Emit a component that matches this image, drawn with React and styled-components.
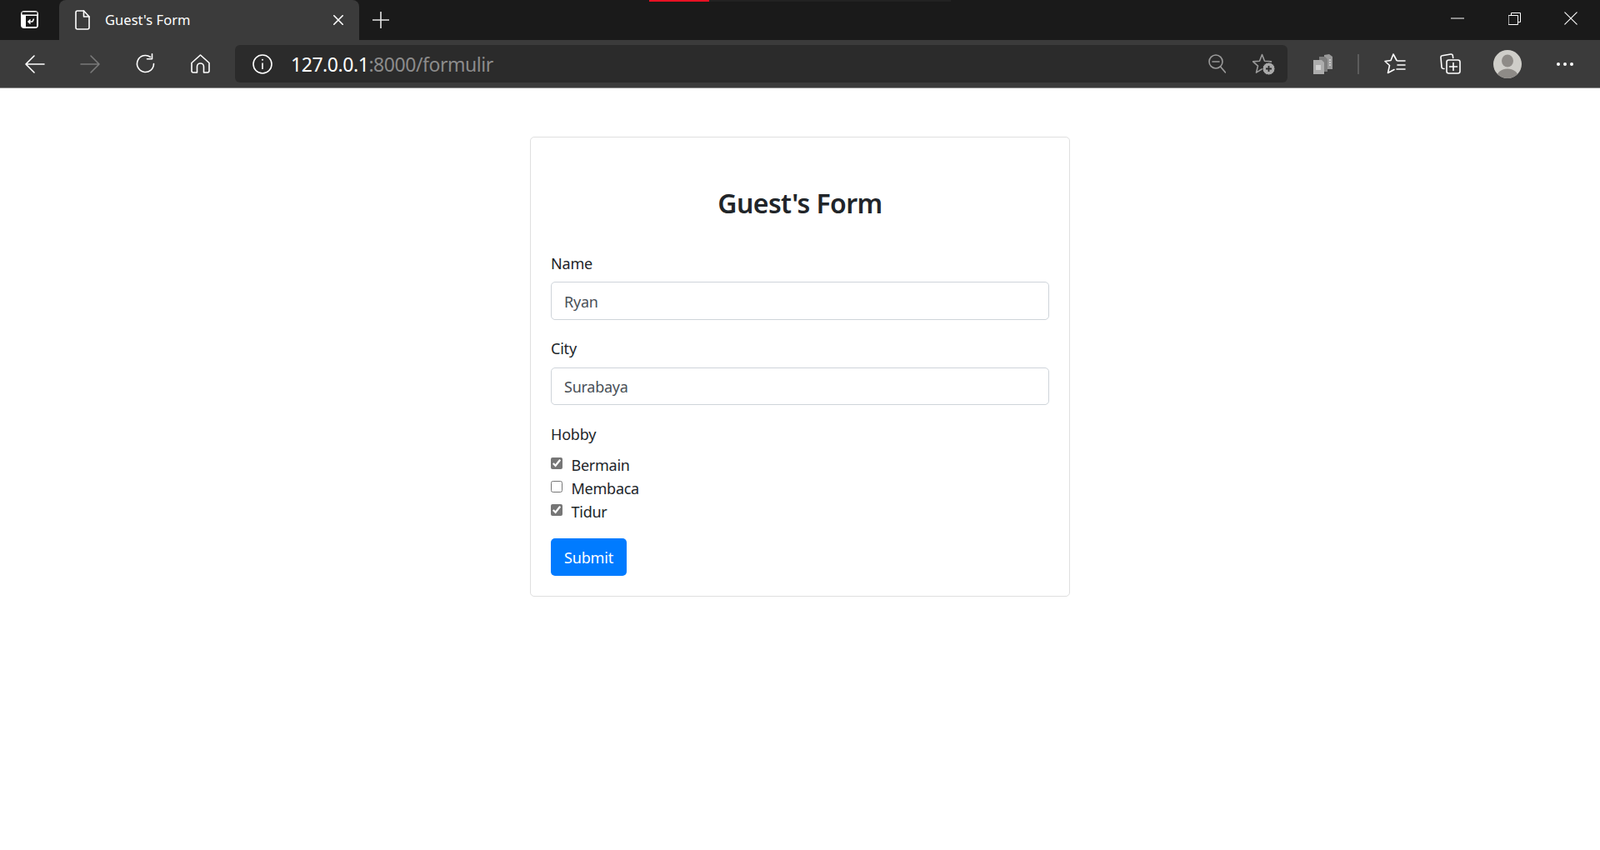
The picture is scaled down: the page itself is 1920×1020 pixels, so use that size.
import styled, { createGlobalStyle } from "styled-components";

const GlobalStyle = createGlobalStyle`
  html, body {
    margin: 0;
    padding: 0;
    height: 100%;
    background: #fff;
    overflow: hidden;
  }
  body {
    font-family: "Noto Sans", "Open Sans", "Liberation Sans", sans-serif;
  }
`;

const TabStrip = styled.div`
  position: relative;
  height: 48px;
  background: #1a1a1a;
  display: flex;
  align-items: stretch;
`;

const Progress = styled.div`
  position: absolute;
  top: 0;
  left: 779px;
  width: 362px;
  height: 2px;
  background: #222222;
`;

const ProgressFill = styled.div`
  width: 72px;
  height: 100%;
  background: #e81123;
`;

const TabActions = styled.div`
  width: 71px;
  padding-bottom: 1px;
  box-sizing: border-box;
  display: flex;
  align-items: center;
  justify-content: center;
`;

const Tab = styled.div`
  width: 360px;
  box-sizing: border-box;
  background: #3b3b3b;
  border-radius: 8px 8px 0 0;
  display: flex;
  align-items: center;
  padding: 0 19px;
  color: #fff;
`;

const TabTitle = styled.span`
  margin: 0 0 2px 18px;
  flex: 1;
  font-size: 16.5px;
  letter-spacing: 0.05px;
  white-space: nowrap;
`;

const NewTab = styled.div`
  width: 52px;
  padding-bottom: 1px;
  box-sizing: border-box;
  display: flex;
  align-items: center;
  justify-content: center;
`;

const WindowControls = styled.div`
  margin-left: auto;
  display: flex;
  padding-right: 1px;
`;

const WindowButton = styled.div`
  width: 68px;
  height: 44px;
  display: flex;
  align-items: center;
  justify-content: center;
`;

const Toolbar = styled.div`
  height: 58px;
  box-sizing: border-box;
  background: #3b3b3b;
  border-bottom: 1px solid #8a8a8a;
  display: flex;
  align-items: center;
`;

const NavGroup = styled.div`
  width: 282px;
  padding-left: 9px;
  box-sizing: border-box;
  display: flex;
`;

const NavSlot = styled.div`
  width: 66px;
  height: 45px;
  display: flex;
  align-items: center;
  justify-content: center;
`;

const AddressBar = styled.div`
  width: 1263px;
  height: 45px;
  box-sizing: border-box;
  background: #2b2b2b;
  border-radius: 6px;
  display: flex;
  align-items: center;
  padding: 0 15px 0 21px;
`;

const Url = styled.div`
  margin: 0 0 -1px 22px;
  flex: 1;
  font-size: 23px;
  letter-spacing: -0.45px;
  color: #8c8c8c;
  white-space: nowrap;
`;

const Host = styled.span`
  color: #fff;
`;

const AddressIcons = styled.div`
  display: flex;
  align-items: center;
  gap: 32px;
`;

const ToolGroup = styled.div`
  display: flex;
  align-items: center;
  flex: 1;
`;

const ToolSlot = styled.div`
  width: ${(p) => p.$w}px;
  height: 45px;
  display: flex;
  align-items: center;
  justify-content: center;
`;

const Separator = styled.div`
  width: 2px;
  height: 24px;
  background: #5c5c5c;
`;

const Page = styled.main`
  padding-top: 58px;
  display: flex;
  justify-content: center;
`;

const Card = styled.form`
  width: 648px;
  box-sizing: border-box;
  border: 1px solid #dfdfdf;
  border-radius: 5px;
  padding: 24px;
  color: #212529;
`;

const Title = styled.h3`
  margin: 35px 0 38px;
  font-size: 32px;
  line-height: 40px;
  font-weight: 600;
  text-align: center;
  letter-spacing: -0.6px;
  color: #212529;
`;

const Group = styled.div`
  margin-bottom: ${(p) => p.$mb}px;
`;

const Label = styled.label`
  display: block;
  font-size: 18px;
  line-height: 28px;
  letter-spacing: -0.2px;
  margin-bottom: ${(p) => p.$mb ?? 9}px;
`;

const Input = styled.input`
  display: block;
  width: 100%;
  height: 45.5px;
  box-sizing: border-box;
  padding: 2px 15px 0;
  border: 1px solid #ced4da;
  border-radius: 5px;
  background: #fff;
  color: #495057;
  font-family: inherit;
  font-size: 18px;
  letter-spacing: -0.25px;
  outline: none;
`;

const CheckRow = styled.label`
  display: flex;
  align-items: center;
  height: 28px;
  font-size: 18px;
  letter-spacing: -0.25px;
`;

const CheckBox = styled.input`
  width: 14px;
  height: 14px;
  margin: 0 10.500px 4px 0;
  accent-color: #767676;
`;

const SubmitButton = styled.button`
  display: block;
  width: 91px;
  height: 45px;
  padding: 0;
  border: 0;
  border-radius: 5px;
  background: #007bff;
  color: #fff;
  font-family: inherit;
  font-size: 18px;
  letter-spacing: -0.15px;
`;

const Svg = ({ w, h, children, stroke = "#fff", sw = 1.6 }) => (
  <svg
    width={w}
    height={h}
    viewBox={`0 0 ${w} ${h}`}
    fill="none"
    stroke={stroke}
    strokeWidth={sw}
    strokeLinecap="round"
    strokeLinejoin="round"
  >
    {children}
  </svg>
);

const TabActionsIcon = () => (
  <svg width="21" height="21" viewBox="0 0 21 21">
    <rect x="0" y="0" width="21" height="21" rx="4" fill="#fff" />
    <rect x="1.500" y="1.500" width="18" height="3" fill="#1a1a1a" />
    <rect x="6" y="6" width="13" height="13" fill="#1a1a1a" />
    <path
      d="M15.500 9.500l-1 2.500a1.500 1.500 0 0 1-1.500 1H9.500M11.500 10.500l-2.500 2.500 2.500 2.500"
      fill="none"
      stroke="#fff"
      strokeWidth="1.500"
    />
  </svg>
);

const DocIcon = () => (
  <Svg w={18} h={24}>
    <path d="M3 1h7.5L17 8v13a2 2 0 0 1-2 2H3a2 2 0 0 1-2-2V3a2 2 0 0 1 2-2z" />
    <path d="M10.5 1v7H17" />
  </Svg>
);

const CloseIcon = ({ size = 12, sw = 1.6 }) => (
  <Svg w={size} h={size} sw={sw}>
    <path d={`M0.8 0.8L${size - 0.8} ${size - 0.8}M${size - 0.8} 0.8L0.8 ${size - 0.8}`} />
  </Svg>
);

const PlusIcon = () => (
  <Svg w={20} h={20} stroke="#e6e6e6">
    <path d="M10 0.5v19M0.5 10h19" />
  </Svg>
);

const ArrowLeft = () => (
  <Svg w={24} h={22}>
    <path d="M1 11h22M11 1L1 11l10 10" />
  </Svg>
);

const ArrowRight = () => (
  <Svg w={25} h={22} stroke="#7a7a7a">
    <path d="M23 11H1M13 1l10 10-10 10" />
  </Svg>
);

const ReloadIcon = () => (
  <Svg w={25} h={25}>
    <path d="M22.5 12.5a10 10 0 1 1-4-8" />
    <path d="M20.5 0.8v6h-6" />
  </Svg>
);

const HomeIcon = () => (
  <Svg w={23} h={23}>
    <path d="M11.5 1L22 10.5V20a2 2 0 0 1-2 2h-4.500V15a4 4 0 0 0-8 0v7H3a2 2 0 0 1-2-2v-9.500z" />
  </Svg>
);

const InfoIcon = () => (
  <svg width="24" height="24" viewBox="0 0 24 24" fill="none" stroke="#fff" strokeWidth="1.6">
    <circle cx="12" cy="12" r="11" />
    <path d="M12 10.500v7.500" />
    <circle cx="12" cy="6.800" r="1" fill="#fff" stroke="none" />
  </svg>
);

const ZoomOutIcon = () => (
  <Svg w={21} h={23} stroke="#9a9a9a">
    <circle cx="9" cy="9" r="8" />
    <path d="M5 9h8M14.500 15l6 7" />
  </Svg>
);

const StarPath = "M11.500 1.500l3 7.800 8 .6-6 5.200 2 8-7-4.400-7 4.400 2-8-6-5.200 8-.6z";

const StarAddIcon = () => (
  <svg width="27" height="26" viewBox="0 0 27 26" fill="none" stroke="#9a9a9a" strokeWidth="1.6" strokeLinejoin="round">
    <path d={StarPath} />
    <circle cx="19.500" cy="18.500" r="7.500" fill="#a8a8a8" stroke="#2b2b2b" strokeWidth="1" />
    <path d="M19.500 15v7M16 18.500h7" stroke="#2b2b2b" strokeWidth="1.800" />
  </svg>
);

const ExtensionIcon = () => (
  <svg width="23" height="24" viewBox="0 0 23 24">
    <path d="M13 1l6-1 4 3v15h-10z" fill="#9a9a9a" />
    <path d="M7 3h7l3 3v15H7z" fill="#7d7d7d" />
    <path d="M0 7h10l3 3v14H0z" fill="#adadad" />
    <rect x="3" y="13" width="6" height="6" fill="#d2d2d2" />
    <path d="M20 6v9" stroke="#dcdcdc" strokeWidth="1.500" strokeDasharray="2 1" />
  </svg>
);

const FavoritesIcon = () => (
  <Svg w={26} h={25}>
    <path d="M15 8.500L11 1 8 8.500 1 9.500l5.500 5L4.500 23.500l7.500-4M16 9h9M16 14h9M15 19h10" />
  </Svg>
);

const CollectionsIcon = () => (
  <Svg w={25} h={25}>
    <path d="M5 18.500l-1.500-.200a2 2 0 0 1-1.500-1.700L1 5a2 2 0 0 1 1.700-2.200L13 1a2 2 0 0 1 2.300 1.700l.4 2.800" />
    <rect x="8" y="8" width="16" height="16" rx="2.500" />
    <path d="M16 11.500v9M11.500 16h9" />
  </Svg>
);

const Avatar = () => (
  <svg width="34" height="34" viewBox="0 0 34 34">
    <defs>
      <clipPath id="avatar-clip">
        <circle cx="17" cy="17" r="17" />
      </clipPath>
    </defs>
    <circle cx="17" cy="17" r="17" fill="#cfcec9" />
    <g clipPath="url(#avatar-clip)" fill="#8e8b87">
      <ellipse cx="17" cy="13" rx="7" ry="7.500" />
      <ellipse cx="17" cy="33" rx="13" ry="10.500" />
    </g>
  </svg>
);

const DotsIcon = () => (
  <svg width="20" height="4" viewBox="0 0 20 4" fill="#fff">
    <circle cx="2" cy="2" r="2" />
    <circle cx="10" cy="2" r="2" />
    <circle cx="18" cy="2" r="2" />
  </svg>
);

const MinimizeIcon = () => (
  <Svg w={16} h={2} sw={1}>
    <path d="M0 1h16" strokeLinecap="butt" />
  </Svg>
);

const RestoreIcon = () => (
  <Svg w={15} h={15} sw={1}>
    <rect x="0.500" y="3.500" width="11" height="11" />
    <path d="M3.500 3.500V0.500h11v11h-3" />
  </Svg>
);

function App() {
  return (
    <>
      <GlobalStyle />
      <TabStrip>
        <Progress>
          <ProgressFill />
        </Progress>
        <TabActions>
          <TabActionsIcon />
        </TabActions>
        <Tab>
          <DocIcon />
          <TabTitle>Guest's Form</TabTitle>
          <CloseIcon />
        </Tab>
        <NewTab>
          <PlusIcon />
        </NewTab>
        <WindowControls>
          <WindowButton>
            <MinimizeIcon />
          </WindowButton>
          <WindowButton>
            <RestoreIcon />
          </WindowButton>
          <WindowButton>
            <CloseIcon size={16} sw={1.1} />
          </WindowButton>
        </WindowControls>
      </TabStrip>
      <Toolbar>
        <NavGroup>
          <NavSlot>
            <ArrowLeft />
          </NavSlot>
          <NavSlot>
            <ArrowRight />
          </NavSlot>
          <NavSlot>
            <ReloadIcon />
          </NavSlot>
          <NavSlot>
            <HomeIcon />
          </NavSlot>
        </NavGroup>
        <AddressBar>
          <InfoIcon />
          <Url>
            <Host>127.0.0.1</Host>:8000/formulir
          </Url>
          <AddressIcons>
            <ZoomOutIcon />
            <StarAddIcon />
          </AddressIcons>
        </AddressBar>
        <ToolGroup>
          <ToolSlot $w={84}>
            <ExtensionIcon />
          </ToolSlot>
          <ToolSlot $w={2}>
            <Separator />
          </ToolSlot>
          <ToolSlot $w={86}>
            <FavoritesIcon />
          </ToolSlot>
          <ToolSlot $w={46}>
            <CollectionsIcon />
          </ToolSlot>
          <ToolSlot $w={92}>
            <Avatar />
          </ToolSlot>
          <ToolSlot $w={46}>
            <DotsIcon />
          </ToolSlot>
        </ToolGroup>
      </Toolbar>
      <Page>
        <Card onSubmit={(e) => e.preventDefault()}>
          <Title>Guest's Form</Title>
          <Group $mb={20}>
            <Label htmlFor="name" $mb={8}>Name</Label>
            <Input id="name" defaultValue="Ryan" />
          </Group>
          <Group $mb={21}>
            <Label htmlFor="city">City</Label>
            <Input id="city" defaultValue="Surabaya" />
          </Group>
          <Group $mb={18}>
            <Label>Hobby</Label>
            <CheckRow>
              <CheckBox type="checkbox" defaultChecked />
              Bermain
            </CheckRow>
            <CheckRow>
              <CheckBox type="checkbox" />
              Membaca
            </CheckRow>
            <CheckRow>
              <CheckBox type="checkbox" defaultChecked />
              Tidur
            </CheckRow>
          </Group>
          <SubmitButton type="submit">Submit</SubmitButton>
        </Card>
      </Page>
    </>
  );
}

export default App;
